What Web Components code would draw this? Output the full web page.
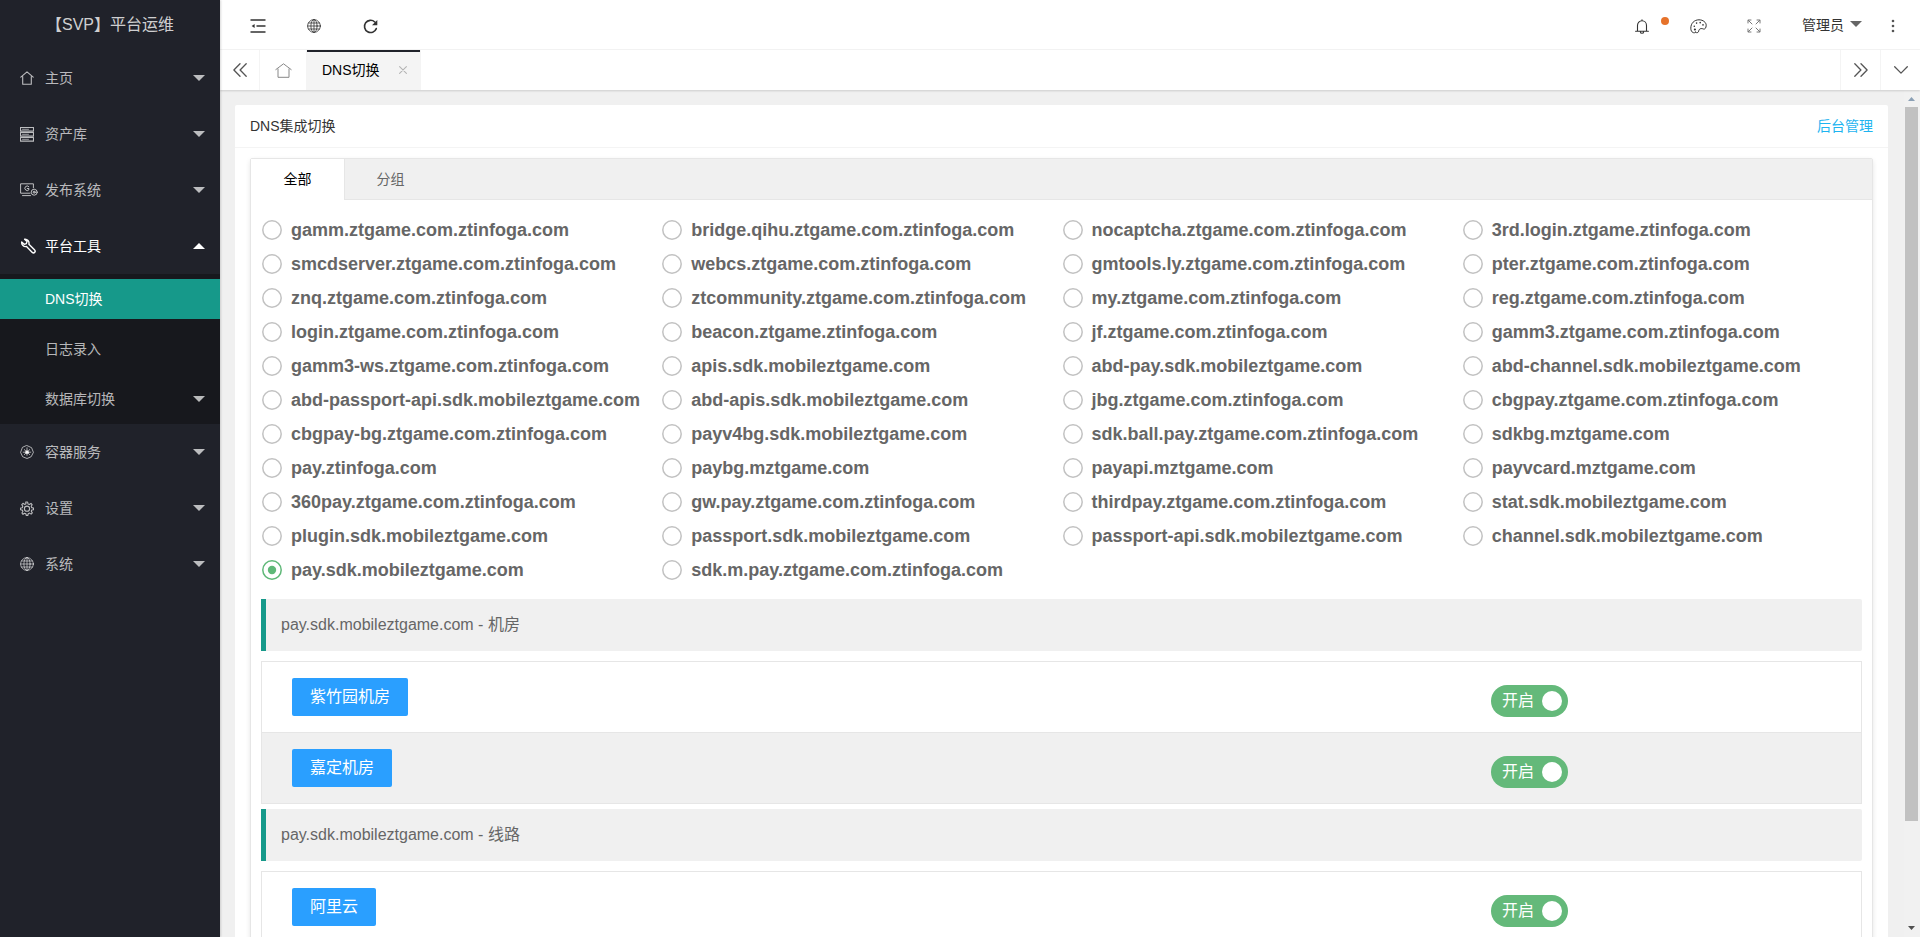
<!DOCTYPE html>
<html lang="zh-CN">
<head>
<meta charset="utf-8">
<title>【SVP】平台运维</title>
<style>
html,body{margin:0;height:100%;overflow:hidden}
body{font:14px/24px "Liberation Sans","Noto Sans CJK SC",sans-serif;color:#666;background:#f0f0f0}
</style>
</head>
<body>
<svp-app></svp-app>
<script>
const S = (w, h, body, sw = 1.2) => `<svg width="${w}" height="${h}" viewBox="0 0 ${w} ${h}" fill="none" stroke="currentColor" stroke-width="${sw}" stroke-linecap="round" stroke-linejoin="round">${body}</svg>`;
const globe = '<circle cx="7" cy="7" r="6.4"/><ellipse cx="7" cy="7" rx="3.1" ry="6.4"/><path d="M7 .6v12.8M.6 7h12.8M1.5 4h11M1.5 10h11"/>';
const ICONS = {
  home: S(14, 14, '<path d="M.8 6.2 7 .9l6.2 5.3M2.7 5.6v7.6h8.6V5.6"/>', 1.1),
  server: S(14, 15, '<path d="M.5.5h13v3.600H.5zM.5 5.500h13v3.600H.5zM.5 10.500h13v3.600H.5z"/><path d="M2.500 2.300h6M2.500 7.300h6M2.500 12.300h6" stroke-width=".8"/>', 1.1),
  deploy: S(18, 14, '<path d="M10 10.2H.6V.8h12.8v4M2.5 12.6h8"/><path d="M8.8 3.6a2.3 2.3 0 1 0 .1 3.2V5.5H7.3"/><circle cx="14.2" cy="9.2" r="3"/><circle cx="14.2" cy="9.2" r="1"/>', 1),
  wrench: S(17, 16, '<path d="M4.600 1.200 7 3.600 6.300 5.700 4.200 6.300 1.700 4C1.300 6.900 3.800 9.200 6.500 8.500l5.800 5.900c1.600 1.400 3.800-.7 2.400-2.300L8.900 6.200C9.600 3.300 7.300.9 4.600 1.200z"/>', 1.4),
  helm: S(14, 14, '<path d="m7 .6 4.600 2.100 1.800 4.700-2.200 4.300L7 13.500l-4.400-1.800L.6 7.400l1.700-4.700z"/><path d="M7 2.800v7.500M3.200 7.200h7.600M4.300 4.600l5.400 5M9.700 4.600l-5.400 5" /><circle cx="7" cy="7.200" r="1.400" fill="currentColor"/>', .9),
  gear: S(14, 15, '<path d="m5.7 1 .3 1.8-1.4.6L3 2.3 1.8 3.7l1 1.6-.5 1.4-1.7.3v1.7l1.8.4.5 1.4-1 1.5L3 13.3l1.5-1.1 1.4.6.3 1.6h1.7l.3-1.7 1.4-.6 1.5 1 1.2-1.2-1-1.6.5-1.3 1.7-.3V7l-1.800-.4-.5-1.300 1-1.500L11 2.400 9.400 3.500 8 2.900 7.600 1z"/><circle cx="7" cy="7.700" r="2.600"/>', 1.1),
  globe: S(14, 14, globe, .8),
  shrink: S(16, 14, '<path d="M.5 1h15M6.500 7h9M.5 13h15" stroke-width="1.5" stroke-linecap="butt"/><path d="M4.600 5v4L1.600 7z" fill="currentColor" stroke="none"/>'),
  refresh: S(15, 15, '<path d="M13.300 9.600A6.100 6.100 0 1 1 11.800 3" stroke-width="1.600"/><path d="M14.300 1v5.300H9z" fill="currentColor" stroke="none"/>'),
  bell: S(14, 15, '<path d="M2.500 12V6.400a4.500 4.600 0 0 1 9 0V12M.6 12.200h12.800M5.400 13a1.600 1.300 0 0 0 3.200 0M7 .7v1"/>', 1.1),
  palette: S(17, 15, '<path d="M5.700 13.200C4.400 14.800.8 13.700.8 9.200.8 4.300 4.300.8 9 .8c4.300 0 7.200 2.800 7.200 5.400 0 2.800-1.300 4.300-2.800 3.800-1.600-.7-3.100-.6-4 .4-1 1-.4 2.500-1.500 3-1.200.6-1.800.2-2.200-.2z"/><path d="M4.300 7.200v.1M6.600 4v.1M10.200 3.600v.1M13 5.800v.1" stroke-width="1.600"/><circle cx="4.900" cy="10.500" r="1.100" fill="currentColor" stroke="none"/>', 1),
  full: S(14, 14, '<path d="M1 4V1h3M1.200 1.200 5 5M10 1h3v3M12.800 1.200 9 5M1 10v3h3M1.200 12.800 5 9M10 13h3v-3M12.800 12.800 9 9"/>', 1),
  more: S(4, 14, '<g fill="currentColor" stroke="none"><circle cx="2" cy="2" r="1.300"/><circle cx="2" cy="7" r="1.300"/><circle cx="2" cy="12" r="1.300"/></g>'),
  prev: S(14, 14, '<path d="M7 .7.9 7 7 13.3M13.2.7 7.1 7l6.1 6.3"/>', 1.3),
  next: S(14, 14, '<path d="m7 .7 6.1 6.3L7 13.3M.8.7 6.9 7 .8 13.3"/>', 1.3),
  down: S(14, 8, '<path d="m.7.8 6.3 6.3L13.3.8"/>', 1.3),
  bighome: S(17, 15, '<path d="M.8 6.6 8.5.8l7.7 5.8M3 6v8.3h11V6"/>', 1),
  close: S(8, 8, '<path d="m.6.6 6.8 6.8M7.4.6.6 7.4"/>', 1.1),
};
function define(name, render) {
  customElements.define(name, class extends HTMLElement {
    connectedCallback() {
      if (this.shadowRoot) return;
      const t = document.createElement('template');
      t.innerHTML = render(this);
      this.attachShadow({ mode: 'open' }).append(t.content.cloneNode(true));
    }
  });
}
define('svp-icon', el => `<style>:host{display:inline-flex;flex:none}svg{display:block}</style>${ICONS[el.getAttribute('name')]}`);

define('svp-nav-item', el => {
  const icon = el.getAttribute('icon'), arrow = el.getAttribute('arrow');
  return `<style>
  :host{display:flex;align-items:center;height:56px;padding:0 15px 0 20px;box-sizing:border-box;color:rgba(255,255,255,.7)}
  :host([open]){color:#fff}
  :host([sub]){height:40px;margin:5px 0}
  :host([active]){background:#16998a;color:#fff}
  .i{width:25px;display:flex}
  .t{flex:1}
  svg{display:block}
  </style><span class="i">${icon ? `<svp-icon name="${icon}"></svp-icon>` : ''}</span><span class="t"><slot></slot></span>
  ${arrow ? `<svg width="12" height="6"><path d="${arrow === 'up' ? 'M0 6 6 0l6 6z' : 'M0 0h12L6 6z'}" fill="currentColor"/></svg>` : ''}`;
});

define('svp-sidebar', () => `<style>
  :host{display:block;width:220px;height:100%;background:#20222a;box-shadow:1px 0 2px rgba(0,0,0,.15);z-index:2}
  .logo{height:50px;line-height:50px;text-align:center;font-size:16px;color:rgba(255,255,255,.8)}
  .sub{display:flow-root;background:#17181d}
  .sub svp-nav-item:not(:first-child){margin-top:10px}
  </style>
  <div class="logo">【SVP】平台运维</div>
  <svp-nav-item icon="home" arrow="down">主页</svp-nav-item>
  <svp-nav-item icon="server" arrow="down">资产库</svp-nav-item>
  <svp-nav-item icon="deploy" arrow="down">发布系统</svp-nav-item>
  <svp-nav-item icon="wrench" arrow="up" open>平台工具</svp-nav-item>
  <div class="sub">
    <svp-nav-item sub active>DNS切换</svp-nav-item>
    <svp-nav-item sub>日志录入</svp-nav-item>
    <svp-nav-item sub arrow="down">数据库切换</svp-nav-item>
  </div>
  <svp-nav-item icon="helm" arrow="down">容器服务</svp-nav-item>
  <svp-nav-item icon="gear" arrow="down">设置</svp-nav-item>
  <svp-nav-item icon="globe" arrow="down">系统</svp-nav-item>`);

define('svp-header', () => `<style>
  :host{display:flex;height:50px;box-sizing:border-box;border-bottom:1px solid #f4f4f4;background:#fff;color:#333;align-items:center}
  .c{display:flex;justify-content:center;align-items:center;width:56px;height:100%;padding-top:3px;box-sizing:border-box}
  .left{display:flex;height:100%;padding-left:10px}
  .right{display:flex;height:100%;margin-left:auto;padding-right:11px}
  .bell{position:relative}
  .bell i{position:absolute;left:47px;top:17px;width:8px;height:8px;border-radius:50%;background:#e6722b}
  .soft{color:#777}
  .user{display:flex;align-items:center;height:100%;padding:0 14px 0 20px;gap:6px}
  .user svg{margin-bottom:1px}
  .more{width:33px;color:#555}
  </style>
  <div class="left"><span class="c"><svp-icon name="shrink"></svp-icon></span><span class="c"><svp-icon name="globe"></svp-icon></span><span class="c"><svp-icon name="refresh"></svp-icon></span></div>
  <div class="right"><span class="c bell"><svp-icon name="bell"></svp-icon><i></i></span><span class="c"><svp-icon name="palette"></svp-icon></span><span class="c soft"><svp-icon name="full"></svp-icon></span>
  <span class="user">管理员<svg width="12" height="6"><path d="M0 0h12L6 6z" fill="#666"/></svg></span><span class="c more"><svp-icon name="more"></svp-icon></span></div>`);

define('svp-tabs', () => `<style>
  :host{display:flex;height:40px;background:#fff;box-shadow:0 1px 2px rgba(0,0,0,.15);position:relative;z-index:1;color:#555}
  span{display:flex;align-items:center;justify-content:center;box-sizing:border-box}
  .b{width:40px}
  .prev{border-right:1px solid #f4f4f4}
  .next,.down{border-left:1px solid #f4f4f4}
  .home{width:46px;color:#888}
  .tab{width:115px;background:#f4f4f4;color:#000;justify-content:flex-start;padding:0 13px 0 15px;border-left:1px solid #f4f4f4;border-right:1px solid #f4f4f4;background-image:linear-gradient(#20222a,#20222a);background-size:113px 2px;background-repeat:no-repeat}
  .tab svp-icon{margin-left:auto;color:#b4b4b4}
  .grow{flex:1}
  </style>
  <span class="b prev"><svp-icon name="prev"></svp-icon></span><span class="home"><svp-icon name="bighome"></svp-icon></span>
  <span class="tab">DNS切换<svp-icon name="close"></svp-icon></span><span class="grow"></span>
  <span class="b next"><svp-icon name="next"></svp-icon></span><span class="b down"><svp-icon name="down"></svp-icon></span>`);

define('svp-radio', el => `<style>
  :host{display:flex;align-items:center;height:34px;font-size:18px;font-weight:bold;color:#666;white-space:nowrap}
  svg{display:block;flex:none;margin:0 9px 0 1px;color:#c2c2c2}
  :host([checked]) svg{color:#5fb878}
  </style><svg width="20" height="20"><circle cx="10" cy="10" r="9.200" fill="none" stroke="currentColor" stroke-width="1.500"/>${el.hasAttribute('checked') ? '<circle cx="10" cy="10" r="4.200" fill="currentColor"/>' : ''}</svg><slot></slot>`);

define('svp-quote', () => `<style>
  :host{display:flex;align-items:center;box-sizing:border-box;height:52px;border-left:5px solid #16998a;border-radius:0 2px 2px 0;background:#f0f0f0;padding-left:15px;font-size:16px;color:#666}
  </style><span><slot></slot></span>`);

define('svp-switch', () => `<style>
  :host{display:flex;align-items:center;justify-content:space-between;box-sizing:border-box;width:77px;height:32px;border-radius:16px;background:#64b97a;padding:0 6px 0 11px;color:#fff;font-size:16px}
  i{width:20px;height:20px;border-radius:50%;background:#fff}
  </style><slot></slot><i></i>`);

define('svp-row', () => `<style>
  :host{display:grid;grid-template-columns:1229px 1fr;height:71px;box-sizing:border-box;border-bottom:1px solid #e6e6e6;background:#fff}
  :host([even]){background:#f0f0f0}
  .b{justify-self:start;height:38px;line-height:38px;margin:16px 0 0 30px;padding:0 18px;border-radius:2px;background:#2a9fff;color:#fff;font-size:16px}
  svp-switch{margin-top:23px}
  </style><span class="b"><slot></slot></span><svp-switch>开启</svp-switch>`);

define('svp-table', () => `<style>:host{display:block;border:1px solid #e6e6e6;border-bottom:0}</style><slot></slot>`);

const DOMAINS = `gamm.ztgame.com.ztinfoga.com bridge.qihu.ztgame.com.ztinfoga.com nocaptcha.ztgame.com.ztinfoga.com 3rd.login.ztgame.ztinfoga.com
smcdserver.ztgame.com.ztinfoga.com webcs.ztgame.com.ztinfoga.com gmtools.ly.ztgame.com.ztinfoga.com pter.ztgame.com.ztinfoga.com
znq.ztgame.com.ztinfoga.com ztcommunity.ztgame.com.ztinfoga.com my.ztgame.com.ztinfoga.com reg.ztgame.com.ztinfoga.com
login.ztgame.com.ztinfoga.com beacon.ztgame.ztinfoga.com jf.ztgame.com.ztinfoga.com gamm3.ztgame.com.ztinfoga.com
gamm3-ws.ztgame.com.ztinfoga.com apis.sdk.mobileztgame.com abd-pay.sdk.mobileztgame.com abd-channel.sdk.mobileztgame.com
abd-passport-api.sdk.mobileztgame.com abd-apis.sdk.mobileztgame.com jbg.ztgame.com.ztinfoga.com cbgpay.ztgame.com.ztinfoga.com
cbgpay-bg.ztgame.com.ztinfoga.com payv4bg.sdk.mobileztgame.com sdk.ball.pay.ztgame.com.ztinfoga.com sdkbg.mztgame.com
pay.ztinfoga.com paybg.mztgame.com payapi.mztgame.com payvcard.mztgame.com
360pay.ztgame.com.ztinfoga.com gw.pay.ztgame.com.ztinfoga.com thirdpay.ztgame.com.ztinfoga.com stat.sdk.mobileztgame.com
plugin.sdk.mobileztgame.com passport.sdk.mobileztgame.com passport-api.sdk.mobileztgame.com channel.sdk.mobileztgame.com
pay.sdk.mobileztgame.com sdk.m.pay.ztgame.com.ztinfoga.com`.split(/\s+/);

define('svp-panel', () => `<style>
  :host{display:block;flex:1;margin:15px 16px 0 15px;background:#fff;border-radius:2px 2px 0 0;min-width:0}
  .h{display:flex;justify-content:space-between;height:43px;line-height:43px;box-sizing:border-box;padding:0 15px;border-bottom:1px solid #f4f4f4;color:#333}
  .h a{color:#1eb4f0}
  .card{margin:10px 15px 0;height:800px;border:1px solid #e6e6e6;box-sizing:border-box;border-radius:2px;box-shadow:0 2px 5px rgba(0,0,0,.1)}
  .tabs{display:flex;height:41px;box-sizing:border-box;background:#f0f0f0;border-bottom:1px solid #e6e6e6;line-height:40px;text-align:center}
  .tabs b{font-weight:normal;color:#000;background:#fff;width:93px;height:41px;border-right:1px solid #e6e6e6}
  .tabs span{width:91px}
  .body{padding:13px 10px 0}
  .radios{display:grid;grid-template-columns:repeat(4,1fr);margin-bottom:12px}
  svp-table{margin:10px 0 5px}
  </style>
  <div class="h"><span>DNS集成切换</span><a>后台管理</a></div>
  <div class="card"><div class="tabs"><b>全部</b><span>分组</span></div>
  <div class="body"><div class="radios">${DOMAINS.map(d => `<svp-radio${d === 'pay.sdk.mobileztgame.com' ? ' checked' : ''}>${d}</svp-radio>`).join('')}</div>
  <svp-quote>pay.sdk.mobileztgame.com - 机房</svp-quote>
  <svp-table><svp-row>紫竹园机房</svp-row><svp-row even>嘉定机房</svp-row></svp-table>
  <svp-quote>pay.sdk.mobileztgame.com - 线路</svp-quote>
  <svp-table><svp-row>阿里云</svp-row></svp-table>
  </div></div>`);

define('svp-scrollbar', () => `<style>
  :host{display:flex;flex-direction:column;width:16px;background:#f1f1f1;align-items:center}
  svg{display:block;flex:none}
  i{width:13px;height:714px;background:#c1c1c1;margin-left:-1px}
  .d{margin-top:auto}
  </style><svg width="16" height="17"><path d="M4 11h7L7.5 7z" fill="#8ba0b5"/></svg><i></i><svg class="d" width="16" height="17"><path d="M4 6h7l-3.500 4z" fill="#505050"/></svg>`);

define('svp-app', () => `<style>
  :host{display:flex;height:100vh;overflow:hidden}
  .main{flex:1;display:flex;flex-direction:column;min-width:0}
  .view{flex:1;display:flex;min-height:0;overflow:hidden;background:#f0f0f0}
  </style><svp-sidebar></svp-sidebar><div class="main"><svp-header></svp-header><svp-tabs></svp-tabs>
  <div class="view"><svp-panel></svp-panel><svp-scrollbar></svp-scrollbar></div></div>`);
</script>
</body>
</html>
